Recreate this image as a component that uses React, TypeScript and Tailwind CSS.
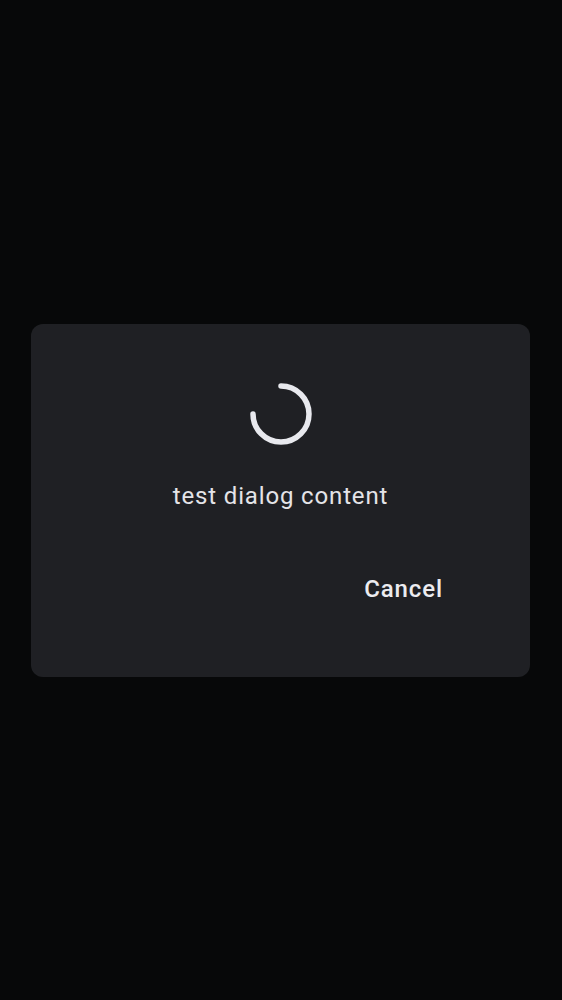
import React from "react";

export default function App() {
  return (
    <div className="min-h-screen w-full bg-[#070809] flex items-center" style={{ fontFamily: "Roboto, 'Noto Sans', sans-serif" }}>
      <div className="ml-[31px] w-[499px] h-[353px] bg-[#1f2024] rounded-[12px] flex flex-col items-center pt-[57px]">
        <svg width="66" height="66" viewBox="0 0 66 66" className="block">
          <path
            d="M 33 5 A 28 28 0 1 1 5 33"
            fill="none"
            stroke="#e8e9ee"
            strokeWidth="5.5"
            strokeLinecap="round"
          />
        </svg>
        <div className="mt-[33px] text-[24px] leading-[32px] text-[#e4e4e8] tracking-[0.85px]">test dialog content</div>
        <div className="self-end mr-[87px] mt-[61px] text-[24px] leading-[32px] font-medium text-[#ececf0] tracking-[0.9px]">Cancel</div>
      </div>
    </div>
  );
}
